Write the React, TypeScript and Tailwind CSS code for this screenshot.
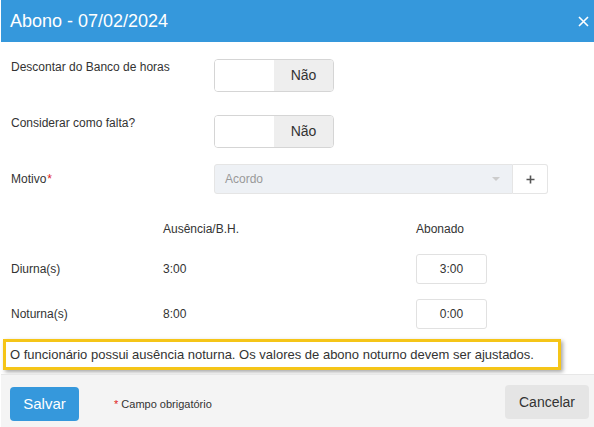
import React from "react";

const Toggle: React.FC = () => (
  <div className="flex w-[120px] h-[33px] border border-[#d5d5d5] rounded-[4px] overflow-hidden">
    <div className="w-[59px] bg-white" />
    <div className="flex-1 bg-[#eeeeee] flex items-center justify-center text-[14px] text-[#333]">Não</div>
  </div>
);

const TimeInput: React.FC<{ value: string }> = ({ value }) => (
  <div className="w-[71px] h-[30px] border border-[#e1e1e1] rounded-[3px] bg-white flex items-center justify-center text-[12px] text-[#333]">
    {value}
  </div>
);

const App: React.FC = () => {
  return (
    <div className="w-[594px] h-[427px] bg-white overflow-hidden pl-px font-['Liberation_Sans',Arial,sans-serif] text-[#333]">
      {/* Header */}
      <div className="h-[42px] bg-[#3598dc] flex items-center justify-between pl-[9px] pr-[5px]">
        <span className="text-white text-[18px] leading-none">Abono - 07/02/2024</span>
        <svg width="11" height="11" viewBox="0 0 11 11" className="mr-0">
          <path d="M1 1L10 10M10 1L1 10" stroke="white" strokeWidth="1.6" />
        </svg>
      </div>

      {/* Body */}
      <div className="pl-[10px] pt-[17px]">
        <div className="flex items-start">
          <label className="w-[203px] text-[12px] leading-4">Descontar do Banco de horas</label>
          <Toggle />
        </div>
        <div className="flex items-start mt-[23px]">
          <label className="w-[203px] text-[12px] leading-4">Considerar como falta?</label>
          <Toggle />
        </div>
        <div className="flex items-center mt-[16px]">
          <label className="w-[203px] text-[12px]">
            Motivo<span className="text-[#e02222] ml-px">*</span>
          </label>
          <div className="flex h-[30px]">
            <div className="w-[299px] bg-[#eef1f5] border border-[#e5e5e5] rounded-l-[3px] flex items-center justify-between pl-[10px] pr-[12px]">
              <span className="text-[12px] text-[#999]">Acordo</span>
              <span className="w-0 h-0 border-l-[4px] border-r-[4px] border-t-[4px] border-l-transparent border-r-transparent border-t-[#ccc]" />
            </div>
            <div className="w-[35px] bg-white border border-l-0 border-[#e5e5e5] rounded-r-[3px] flex items-center justify-center">
              <svg width="9" height="9" viewBox="0 0 9 9">
                <path d="M4.5 0.5V8.5M0.5 4.5H8.5" stroke="#555" strokeWidth="1.6" />
              </svg>
            </div>
          </div>
        </div>

        {/* Table */}
        <div className="grid grid-cols-[152px_253px_auto] mt-[27px] text-[12px]">
          <div />
          <div className="h-[16px] leading-4">Ausência/B.H.</div>
          <div className="h-[16px] leading-4">Abonado</div>
        </div>
        <div className="grid grid-cols-[152px_253px_auto] items-center mt-[17px] text-[12px]">
          <div>Diurna(s)</div>
          <div>3:00</div>
          <TimeInput value="3:00" />
        </div>
        <div className="grid grid-cols-[152px_253px_auto] items-center mt-[15px] text-[12px]">
          <div>Noturna(s)</div>
          <div>8:00</div>
          <TimeInput value="0:00" />
        </div>
      </div>

      {/* Notice */}
      <div className="ml-[2px] mt-[10px] w-[558px] h-[31px] border-[3px] border-[#f5c518] bg-white shadow-[2px_2px_4px_rgba(0,0,0,0.35)] flex items-center pl-[4px] text-[13px] text-[#333]">
        O funcionário possui ausência noturna. Os valores de abono noturno devem ser ajustados.
      </div>

      {/* Footer */}
      <div className="mt-[4px] h-[60px] bg-[#f4f4f4] border-t border-[#e7e7e7] flex items-start justify-between pl-[9px] pr-[5px] pt-[10px]">
        <div className="flex items-center mt-[2px]">
          <button className="w-[69px] h-[34px] bg-[#3598dc] text-white text-[15px] rounded-[4px]">Salvar</button>
          <span className="ml-[35px] text-[11px] text-[#333]">
            <span className="text-[#e02222]">*</span> Campo obrigatório
          </span>
        </div>
        <button className="w-[84px] h-[34px] bg-[#e5e5e5] text-[#333] text-[14px] rounded-[4px]">Cancelar</button>
      </div>
    </div>
  );
};

export default App;
